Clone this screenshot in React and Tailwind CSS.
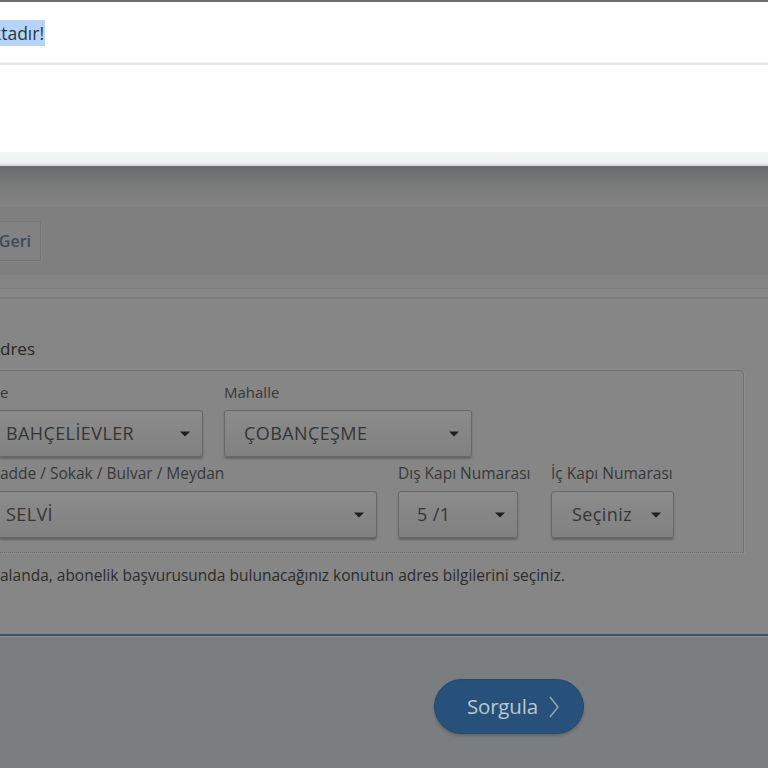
import React from "react";

const Caret = () => (
  <svg width="10" height="6" viewBox="0 0 10 6" className="shrink-0">
    <path d="M0 0.5 L10 0.5 L5 5.5 Z" fill="#1e1e1e" />
  </svg>
);

const Select = ({ value, className, pl }) => (
  <div
    className={
      "h-[47px] flex items-center justify-between pr-[12px] rounded-[3px] border border-[#666766] bg-gradient-to-b from-[#8a8b8a] to-[#808180] shadow-[0_2px_2px_rgba(0,0,0,0.25)] " +
      className
    }
  >
    <span className={"text-[18px] text-[#353535] tracking-[0.4px] whitespace-nowrap " + pl}>{value}</span>
    <Caret />
  </div>
);

export default function App() {
  return (
    <div
      className="w-[768px] h-[768px] overflow-hidden flex flex-col bg-[#858685]"
      style={{ fontFamily: '"Open Sans", "Noto Sans", sans-serif' }}
    >
      <div className="h-[2px] bg-[#6c6d6d] shrink-0" />
      {/* Modal */}
      <div className="h-[164px] shrink-0 bg-white flex flex-col">
        <div className="h-[60px] pt-[18px] overflow-hidden">
          <span className="bg-[#b6d5f6] text-[17.5px] leading-[26px] text-[#26364a] inline-block pr-[1px] ml-[-8px] whitespace-nowrap">
            ktadır!
          </span>
        </div>
        <div className="h-[1px] bg-[#f2f3f3]" />
        <div className="h-[2px] bg-[#e4e6e7]" />
        <div className="flex-1 bg-white" />
        <div className="h-[12px] bg-gradient-to-b from-[#f6f8f8] to-[#eceff0]" />
        <div className="h-[2px] bg-[#d9dddf]" />
      </div>
      {/* Overlay header */}
      <div className="h-[39px] shrink-0 bg-gradient-to-b from-[#686b6b] via-[#7b7c7c] to-[#808180]" />
      <div className="h-[1px] bg-[#858685] shrink-0" />
      <div className="h-[69px] shrink-0 bg-[#7e7f7e] flex items-start pt-[15px]">
        <div className="h-[40px] w-[41px] flex items-center justify-end pr-[9px] bg-[#818281] border border-l-0 border-[#737473] rounded-r-[2px] shadow-[1px_1px_0_#868786] overflow-hidden">
          <span className="text-[16px] font-semibold text-[#3a4c58] whitespace-nowrap">Geri</span>
        </div>
      </div>
      <div className="h-[13px] shrink-0 bg-[#838483]" />
      <div className="h-[1px] shrink-0 bg-[#7b7c7b]" />
      <div className="h-[8px] shrink-0 bg-[#878887]" />
      <div className="h-[2px] shrink-0 bg-[#7a7b7a]" />
      {/* Content */}
      <div className="shrink-0 bg-[#858685] pt-[38px] h-[335px] flex flex-col">
        <div className="text-[17px] leading-[24px] text-[#262626] mb-[9px]">dres</div>
        <div className="w-[744px] border-t border-r border-[#717271] rounded-tr-[5px] shadow-[1px_1px_0_#8e8f8e] flex flex-col pt-[11px]">
          <div className="flex gap-[21px]">
            <div className="flex flex-col gap-[8px]">
              <span className="text-[15px] leading-[20px] text-[#383838]">e</span>
              <Select value="BAHÇELİEVLER" className="w-[203px] border-l-0 rounded-l-none" pl="pl-[6px]" />
            </div>
            <div className="flex flex-col gap-[8px]">
              <span className="text-[15px] leading-[20px] text-[#383838]">Mahalle</span>
              <Select value="ÇOBANÇEŞME" className="w-[248px]" pl="pl-[19px]" />
            </div>
          </div>
          <div className="flex mt-[6px]">
            <div className="flex flex-col gap-[8px] w-[377px]">
              <span className="text-[15.5px] leading-[20px] text-[#383838] whitespace-nowrap">adde / Sokak / Bulvar / Meydan</span>
              <Select value="SELVİ" className="w-[377px] border-l-0 rounded-l-none" pl="pl-[6px]" />
            </div>
            <div className="flex flex-col gap-[8px] ml-[21px] w-[120px]">
              <span className="text-[15.5px] leading-[20px] text-[#383838] whitespace-nowrap">Dış Kapı Numarası</span>
              <Select value="5 /1" className="w-[120px]" pl="pl-[18px]" />
            </div>
            <div className="flex flex-col gap-[8px] ml-[33px] w-[123px]">
              <span className="text-[15.5px] leading-[20px] text-[#383838] whitespace-nowrap">İç Kapı Numarası</span>
              <Select value="Seçiniz" className="w-[123px]" pl="pl-[20px]" />
            </div>
          </div>
          <div className="h-[14px]" />
          <div className="border-b border-dotted border-[#6c6d6c]" />
        </div>
        <div className="mt-[12px] text-[15.5px] leading-[20px] text-[#2c2c2c] whitespace-nowrap">
          alanda, abonelik başvurusunda bulunacağınız konutun adres bilgilerini seçiniz.
        </div>
      </div>
      <div className="h-[2px] shrink-0 bg-[#3d5160]" />
      <div className="h-[1px] shrink-0 bg-[#8a8d8f]" />
      {/* Footer */}
      <div className="flex-1 bg-[#7b7e80] flex justify-end pr-[184px] pt-[42px]">
        <div className="w-[150px] h-[55px] rounded-full bg-[#27507a] border border-[#224a6c] shadow-[0_2px_3px_rgba(0,0,0,0.2)] flex items-center pl-[32px] gap-[11px]">
          <span className="text-[20.5px] text-[#b9c7d1] tracking-[-0.2px]">Sorgula</span>
          <svg width="10" height="22" viewBox="0 0 10 22">
            <path d="M1 1 L9 11 L1 21" stroke="#8ea3b3" strokeWidth="1.6" fill="none" />
          </svg>
        </div>
      </div>
    </div>
  );
}
